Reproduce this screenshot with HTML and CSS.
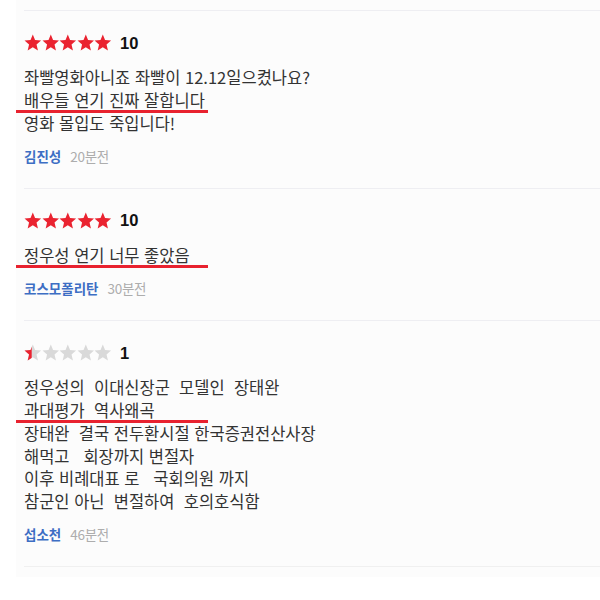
FILE: index.html
```html
<!DOCTYPE html>
<html lang="ko">
<head>
<meta charset="utf-8">
<link rel="stylesheet" href="styles.css">
</head>
<body>
<div class="panel">
  <div class="review">
    <div class="rating">
      <div class="stars">
        <svg class="star" viewBox="0 0 24 24"><polygon class="on" points="12,0.8 15.1,8.3 23.3,8.9 17.1,14.2 19,22.6 12,18.2 5,22.6 6.9,14.2 0.7,8.9 8.9,8.3"/></svg>
        <svg class="star" viewBox="0 0 24 24"><polygon class="on" points="12,0.8 15.1,8.3 23.3,8.9 17.1,14.2 19,22.6 12,18.2 5,22.6 6.9,14.2 0.7,8.9 8.9,8.3"/></svg>
        <svg class="star" viewBox="0 0 24 24"><polygon class="on" points="12,0.8 15.1,8.3 23.3,8.9 17.1,14.2 19,22.6 12,18.2 5,22.6 6.9,14.2 0.7,8.9 8.9,8.3"/></svg>
        <svg class="star" viewBox="0 0 24 24"><polygon class="on" points="12,0.8 15.1,8.3 23.3,8.9 17.1,14.2 19,22.6 12,18.2 5,22.6 6.9,14.2 0.7,8.9 8.9,8.3"/></svg>
        <svg class="star" viewBox="0 0 24 24"><polygon class="on" points="12,0.8 15.1,8.3 23.3,8.9 17.1,14.2 19,22.6 12,18.2 5,22.6 6.9,14.2 0.7,8.9 8.9,8.3"/></svg>
      </div>
      <span class="score">10</span>
    </div>
    <div class="text">
      <div class="line">좌빨영화아니죠 좌빨이 12.12일으켰나요?</div>
      <div class="line marked">배우들 연기 진짜 잘합니다</div>
      <div class="line">영화 몰입도 죽입니다!</div>
    </div>
    <div class="meta"><span class="author">김진성</span><span class="time">20분전</span></div>
  </div>

  <div class="review">
    <div class="rating">
      <div class="stars">
        <svg class="star" viewBox="0 0 24 24"><polygon class="on" points="12,0.8 15.1,8.3 23.3,8.9 17.1,14.2 19,22.6 12,18.2 5,22.6 6.9,14.2 0.7,8.9 8.9,8.3"/></svg>
        <svg class="star" viewBox="0 0 24 24"><polygon class="on" points="12,0.8 15.1,8.3 23.3,8.9 17.1,14.2 19,22.6 12,18.2 5,22.6 6.9,14.2 0.7,8.9 8.9,8.3"/></svg>
        <svg class="star" viewBox="0 0 24 24"><polygon class="on" points="12,0.8 15.1,8.3 23.3,8.9 17.1,14.2 19,22.6 12,18.2 5,22.6 6.9,14.2 0.7,8.9 8.9,8.3"/></svg>
        <svg class="star" viewBox="0 0 24 24"><polygon class="on" points="12,0.8 15.1,8.3 23.3,8.9 17.1,14.2 19,22.6 12,18.2 5,22.6 6.9,14.2 0.7,8.9 8.9,8.3"/></svg>
        <svg class="star" viewBox="0 0 24 24"><polygon class="on" points="12,0.8 15.1,8.3 23.3,8.9 17.1,14.2 19,22.6 12,18.2 5,22.6 6.9,14.2 0.7,8.9 8.9,8.3"/></svg>
      </div>
      <span class="score">10</span>
    </div>
    <div class="text">
      <div class="line marked">정우성 연기 너무 좋았음</div>
    </div>
    <div class="meta"><span class="author">코스모폴리탄</span><span class="time">30분전</span></div>
  </div>

  <div class="review last">
    <div class="rating">
      <div class="stars">
        <svg class="star" viewBox="0 0 24 24">
          <defs><clipPath id="half"><rect x="0" y="0" width="10.5" height="24"/></clipPath></defs>
          <polygon class="off" points="12,0.8 15.1,8.3 23.3,8.9 17.1,14.2 19,22.6 12,18.2 5,22.6 6.9,14.2 0.7,8.9 8.9,8.3"/>
          <polygon class="on" clip-path="url(#half)" points="12,0.8 15.1,8.3 23.3,8.9 17.1,14.2 19,22.6 12,18.2 5,22.6 6.9,14.2 0.7,8.9 8.9,8.3"/>
        </svg>
        <svg class="star" viewBox="0 0 24 24"><polygon class="off" points="12,0.8 15.1,8.3 23.3,8.9 17.1,14.2 19,22.6 12,18.2 5,22.6 6.9,14.2 0.7,8.9 8.9,8.3"/></svg>
        <svg class="star" viewBox="0 0 24 24"><polygon class="off" points="12,0.8 15.1,8.3 23.3,8.9 17.1,14.2 19,22.6 12,18.2 5,22.6 6.9,14.2 0.7,8.9 8.9,8.3"/></svg>
        <svg class="star" viewBox="0 0 24 24"><polygon class="off" points="12,0.8 15.1,8.3 23.3,8.9 17.1,14.2 19,22.6 12,18.2 5,22.6 6.9,14.2 0.7,8.9 8.9,8.3"/></svg>
        <svg class="star" viewBox="0 0 24 24"><polygon class="off" points="12,0.8 15.1,8.3 23.3,8.9 17.1,14.2 19,22.6 12,18.2 5,22.6 6.9,14.2 0.7,8.9 8.9,8.3"/></svg>
      </div>
      <span class="score">1</span>
    </div>
    <div class="text">
      <div class="line">정우성의  이대신장군  모델인  장태완</div>
      <div class="line marked">과대평가  역사왜곡</div>
      <div class="line">장태완  결국 전두환시절 한국증권전산사장</div>
      <div class="line">해먹고   회장까지 변절자</div>
      <div class="line">이후 비례대표 로   국회의원 까지</div>
      <div class="line">참군인 아닌  변절하여  호의호식함</div>
    </div>
    <div class="meta"><span class="author">섭소천</span><span class="time">46분전</span></div>
  </div>
</div>
</body>
</html>
```

FILE: styles.css
```css
html, body {
  margin: 0;
  padding: 0;
  background: #ffffff;
}

body {
  font-family: "Noto Sans CJK KR", "Noto Sans", sans-serif;
}

.panel {
  margin-left: 16px;
  padding: 10px 0 10px 8px;
  background: #fcfcfc;
}

.review {
  border-top: 1px solid #eeeef2;
  padding: 24px 0 22px 0;
}

.review.last {
  border-bottom: 1px solid #f0f0f0;
}

.rating {
  display: flex;
  align-items: center;
  height: 16px;
  gap: 8px;
}

.stars {
  display: flex;
  gap: 0;
}

.star {
  width: 17.6px;
  height: 17.6px;
  display: block;
}

.star .on {
  fill: #ea2330;
}

.star .off {
  fill: #d9d9d9;
}

.score {
  font-family: "Liberation Sans", Arial, sans-serif;
  font-weight: bold;
  font-size: 16.5px;
  color: #111111;
  line-height: 17px;
}

.text {
  margin-top: 15px;
  font-size: 16.5px;
  line-height: 22.8px;
  color: #333333;
}

.line {
  white-space: pre-wrap;
}

.line.marked {
  position: relative;
}

.line.marked::after {
  content: "";
  position: absolute;
  left: -8px;
  bottom: -1px;
  width: 192px;
  height: 3px;
  background: #e8222f;
}

.meta {
  margin-top: 11.5px;
  display: flex;
  align-items: baseline;
  gap: 9px;
  line-height: 20px;
}

.author {
  font-size: 13.5px;
  font-weight: bold;
  color: #3d6ec4;
}

.time {
  font-size: 13.5px;
  color: #adadad;
  letter-spacing: -0.3px;
}
```
